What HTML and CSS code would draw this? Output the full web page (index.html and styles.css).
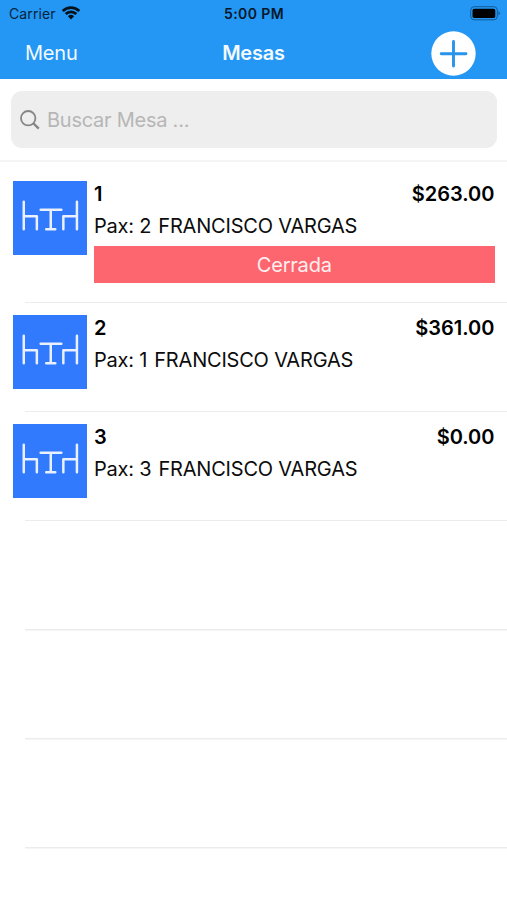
FILE: index.html
```html
<!DOCTYPE html>
<html lang="es">
<head>
	<meta charset="utf-8">
	<meta name="viewport" content="width=device-width, initial-scale=1.0">
	<title>Mesas</title>
	<link rel="stylesheet" href="styles.css">
</head>
<body>

<svg class="defs" width="0" height="0">
	<symbol id="mesa" viewBox="0 0 73 73">
		<path d="M10.700 20.500V48M10.700 35H23.700V48M27.500 28.500H48M37.500 28.500V48M33 48H42M50 48V35H63.500M63.500 20.500V48" fill="none" stroke="#e9f0ff" stroke-width="2.500" stroke-linecap="round" stroke-linejoin="round"/>
	</symbol>
</svg>

<div class="header">
	<div class="status">
		<div class="carrier">
			<span>Carrier</span>
			<svg width="20" height="15" viewBox="0 0 20 15">
				<path d="M1.700 6A11.700 11.700 0 0 1 18.300 6M4.700 9A7.500 7.500 0 0 1 15.300 9" fill="none" stroke="#06121d" stroke-width="2.700"/>
				<path d="M10 14.500L6.900 11.300A4.500 4.500 0 0 1 13.100 11.300Z" fill="#06121d"/>
			</svg>
		</div>
		<span class="time">5:00 PM</span>
		<svg class="battery" width="31" height="15" viewBox="0 0 31 15">
			<rect x="0.700" y="0.700" width="26.600" height="13.100" rx="3.500" fill="none" stroke="#145a94" stroke-width="1"/>
			<rect x="2.500" y="2.700" width="22.800" height="9.300" rx="1.800" fill="#000"/>
			<path d="M28.500 5L30.300 7.200L28.500 9.400Z" fill="#145a94"/>
		</svg>
	</div>
	<div class="nav">
		<a class="menu">Menu</a>
		<span class="title">Mesas</span>
		<svg class="add" width="45" height="45" viewBox="0 0 45 45">
			<circle cx="22.500" cy="22.500" r="22.200" fill="#fff"/>
			<path d="M22.500 10.500V35M10.200 22.700H35" stroke="#2a93ea" stroke-width="2.900" stroke-linecap="round"/>
		</svg>
	</div>
</div>

<div class="search">
	<div class="box">
		<svg width="20" height="20" viewBox="0 0 20 20">
			<circle cx="8.200" cy="8.200" r="7.200" fill="none" stroke="#858585" stroke-width="1.800"/>
			<path d="M13.500 13.500L18.800 18.700" stroke="#858585" stroke-width="2.400"/>
		</svg>
		<span>Buscar Mesa ...</span>
	</div>
</div>

<ul class="list">
	<li class="closed">
		<svg class="icon"><use href="#mesa"/></svg>
		<div class="info">
			<div class="top"><span>1</span><span>$263.00</span></div>
			<p><span class="pax">Pax: 2</span><span class="name">FRANCISCO VARGAS</span></p>
			<div class="state">Cerrada</div>
		</div>
	</li>
	<li>
		<svg class="icon"><use href="#mesa"/></svg>
		<div class="info">
			<div class="top"><span>2</span><span>$361.00</span></div>
			<p><span class="pax">Pax: 1</span><span class="name">FRANCISCO VARGAS</span></p>
		</div>
	</li>
	<li>
		<svg class="icon"><use href="#mesa"/></svg>
		<div class="info">
			<div class="top"><span>3</span><span>$0.00</span></div>
			<p><span class="pax">Pax: 3</span><span class="name">FRANCISCO VARGAS</span></p>
		</div>
	</li>
	<li></li>
	<li></li>
	<li></li>
</ul>

</body>
</html>
```
FILE: styles.css
```css
html,body{
	height:100%;
}
body{
	margin:0; background:#fff; overflow:hidden;
	font-family:Inter,"Liberation Sans",sans-serif; font-size:20px; color:#0c0c0c;
}
ul,li,p{
	margin:0; padding:0; list-style:none;
}
svg{
	display:block; flex:none;
}
.defs{
	position:absolute;
}

/* header */
.header{
	height:79px; background:#2397f3;
}
.status{
	height:27px; padding:0 6px 0 9px;
	display:grid; grid-template-columns:1fr auto 1fr; align-items:center;
	font-size:14px; line-height:27px; color:#06233b;
}
.carrier{
	display:flex; align-items:center; gap:5px;
	letter-spacing:0.1px;
}
.carrier svg{
	margin-top:-2px;
}
.time{
	margin-right:2px;
	font-weight:600; color:#06182a; letter-spacing:0.4px;
}
.battery{
	justify-self:end;
}
.nav{
	height:52px; padding:0 25px;
	display:grid; grid-template-columns:1fr auto 1fr; align-items:center;
	color:#f2faff; line-height:52px;
}
.menu{
	letter-spacing:-0.2px;
}
.title{
	font-weight:600; letter-spacing:-0.2px;
}
.add{
	justify-self:end; margin-right:6px;
}

/* search */
.search{
	height:69px; padding:12px 10px 0 11px; border-bottom:2px solid #f5f5f5;
}
.box{
	height:57px; padding:0 9px; background:#eee; border-radius:11px;
	display:flex; align-items:center; gap:7px;
	color:#b6b6b6; letter-spacing:-0.25px;
}
.box span{
	padding-top:1px;
}

/* tables */
.list{
	padding-top:6px;
}
.list li{
	height:96.200px; padding:12px 12.500px 0 13px;
	display:flex; align-items:flex-start; gap:7.500px;
	border-bottom:1px solid transparent;
	background:linear-gradient(#ececec,#ececec) no-repeat 25px 100%/100% 1.500px border-box;
}
.list .closed{
	height:121px; padding-top:13px;
}
.icon{
	width:73.500px; height:73.500px; background:#3179fd;
}
.info{
	flex:1;
}
.top{
	display:flex; justify-content:space-between;
	font-weight:600; line-height:26px; color:#000;
}
.info p{
	display:flex; gap:7px;
	line-height:39px; letter-spacing:-0.2px;
}
.state{
	height:37px; background:#fd656f;
	line-height:38px; text-align:center; color:#fff0f0; letter-spacing:-0.2px;
}
```
